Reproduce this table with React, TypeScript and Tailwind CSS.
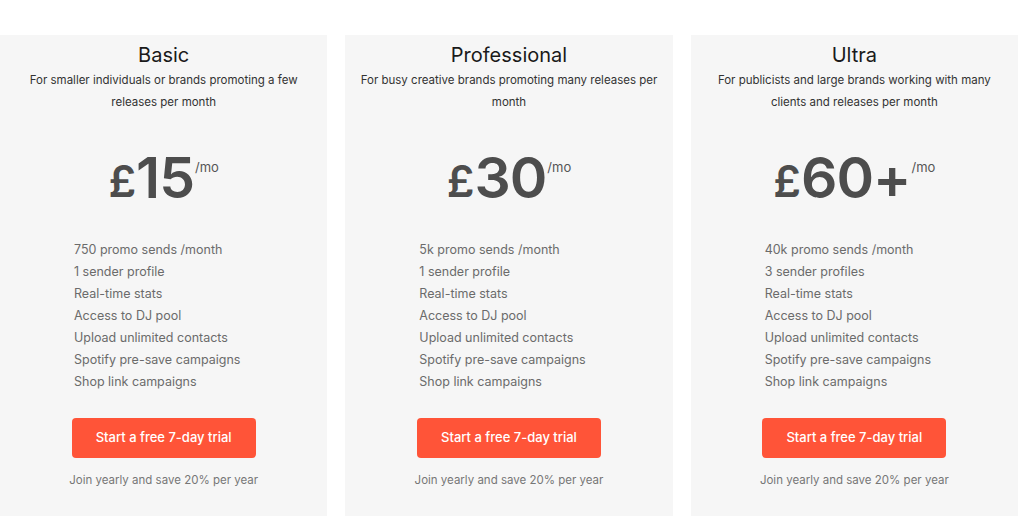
const plans = [
  {
    name: "Basic",
    desc: "For smaller individuals or brands promoting a few releases per month",
    price: "15",
    features: [
      "750 promo sends /month",
      "1 sender profile",
      "Real-time stats",
      "Access to DJ pool",
      "Upload unlimited contacts",
      "Spotify pre-save campaigns",
      "Shop link campaigns",
    ],
  },
  {
    name: "Professional",
    desc: "For busy creative brands promoting many releases per month",
    price: "30",
    features: [
      "5k promo sends /month",
      "1 sender profile",
      "Real-time stats",
      "Access to DJ pool",
      "Upload unlimited contacts",
      "Spotify pre-save campaigns",
      "Shop link campaigns",
    ],
  },
  {
    name: "Ultra",
    desc: "For publicists and large brands working with many clients and releases per month",
    price: "60+",
    features: [
      "40k promo sends /month",
      "3 sender profiles",
      "Real-time stats",
      "Access to DJ pool",
      "Upload unlimited contacts",
      "Spotify pre-save campaigns",
      "Shop link campaigns",
    ],
  },
];

const App = () => {
  return (
    <div className="w-[1024px] h-[529px] bg-white pt-[35px] font-['Inter',sans-serif]">
      <div className="w-[1018px] grid grid-cols-3 gap-[18px]">
        {plans.map((plan) => (
          <div key={plan.name} className="h-[481px] bg-[#f6f6f6] pt-[6px] px-[14px] flex flex-col">
            <h2 className="text-center text-[20px] leading-[28px] text-[#1a1a1a]">{plan.name}</h2>
            <p className="text-center text-[11.5px] leading-[22px] text-[#333]">{plan.desc}</p>
            <div className="mt-[35px] flex justify-center items-start h-[60px] text-[#4d4d4d]">
              <span className="text-[44px] leading-[60px] font-semibold mt-[3px]">£</span>
              <span className="text-[57px] leading-[60px] font-semibold tracking-[-1px]">{plan.price}</span>
              <span className="text-[13px] leading-[16px] mt-[11px] ml-[1px] text-[#555]">/mo</span>
            </div>
            <ul className="mt-[31px] pl-[60px]">
              {plan.features.map((f) => (
                <li key={f} className="text-[12.5px] leading-[22px] text-[#6b6b6b]">{f}</li>
              ))}
            </ul>
            <div className="flex justify-center mt-[25px]">
              <button className="w-[184px] h-[40px] rounded-[4px] bg-[#ff5438] text-white text-[13px] font-medium">
                Start a free 7-day trial
              </button>
            </div>
            <p className="mt-[13px] text-center text-[11.5px] leading-[18px] text-[#777]">Join yearly and save 20% per year</p>
          </div>
        ))}
      </div>
    </div>
  );
};

export default App;
